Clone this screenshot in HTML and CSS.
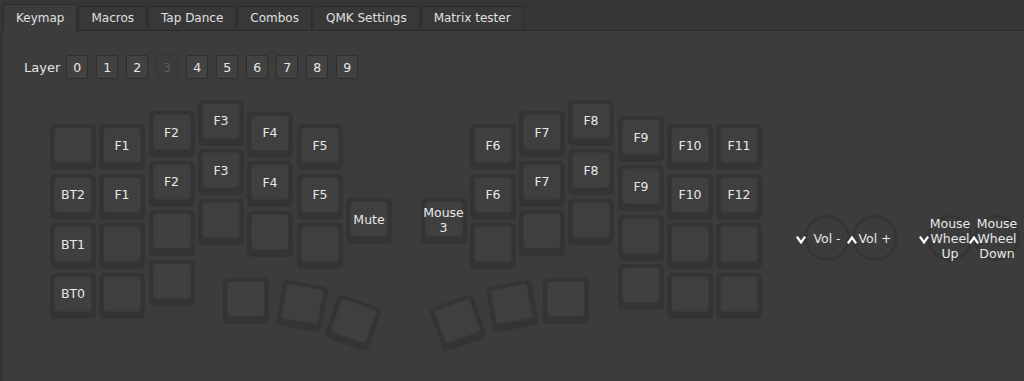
FILE: index.html
```html
<!DOCTYPE html>
<html>
<head>
<meta charset="utf-8">
<link rel="stylesheet" href="styles.css">
</head>
<body>
<div class="window">
  <div class="tabbar">
    <div class="tab active">Keymap</div>
    <div class="tab">Macros</div>
    <div class="tab">Tap Dance</div>
    <div class="tab">Combos</div>
    <div class="tab">QMK Settings</div>
    <div class="tab">Matrix tester</div>
  </div>
  <div class="pane">
    <div class="layer-row">
      <span class="layer-label">Layer</span>
      <div class="layer-btn">0</div>
      <div class="layer-btn">1</div>
      <div class="layer-btn">2</div>
      <div class="layer-btn current">3</div>
      <div class="layer-btn">4</div>
      <div class="layer-btn">5</div>
      <div class="layer-btn">6</div>
      <div class="layer-btn">7</div>
      <div class="layer-btn">8</div>
      <div class="layer-btn">9</div>
    </div>
    <div class="board">
      <!-- left half -->
      <div class="key" style="left:47px;top:45px"><div class="cap"></div></div>
      <div class="key" style="left:47px;top:94.5px"><div class="cap">BT2</div></div>
      <div class="key" style="left:47px;top:144px"><div class="cap">BT1</div></div>
      <div class="key" style="left:47px;top:193.5px"><div class="cap">BT0</div></div>

      <div class="key" style="left:96px;top:45px"><div class="cap">F1</div></div>
      <div class="key" style="left:96px;top:94.5px"><div class="cap">F1</div></div>
      <div class="key" style="left:96px;top:144px"><div class="cap"></div></div>
      <div class="key" style="left:96px;top:193.5px"><div class="cap"></div></div>

      <div class="key" style="left:145.5px;top:32px"><div class="cap">F2</div></div>
      <div class="key" style="left:145.5px;top:81.5px"><div class="cap">F2</div></div>
      <div class="key" style="left:145.5px;top:131px"><div class="cap"></div></div>
      <div class="key" style="left:145.5px;top:180.5px"><div class="cap"></div></div>

      <div class="key" style="left:195px;top:20.5px"><div class="cap">F3</div></div>
      <div class="key" style="left:195px;top:70px"><div class="cap">F3</div></div>
      <div class="key" style="left:195px;top:119.5px"><div class="cap"></div></div>

      <div class="key" style="left:244px;top:32.5px"><div class="cap">F4</div></div>
      <div class="key" style="left:244px;top:82px"><div class="cap">F4</div></div>
      <div class="key" style="left:244px;top:131.5px"><div class="cap"></div></div>

      <div class="key" style="left:294px;top:45px"><div class="cap">F5</div></div>
      <div class="key" style="left:294px;top:94.5px"><div class="cap">F5</div></div>
      <div class="key" style="left:294px;top:144px"><div class="cap"></div></div>

      <div class="key" style="left:343px;top:119px"><div class="cap">Mute</div></div>

      <div class="key" style="left:220px;top:199px"><div class="cap"></div></div>
      <div class="key" style="left:275.5px;top:203.5px;transform:rotate(10deg)"><div class="cap"></div></div>
      <div class="key" style="left:327px;top:221px;transform:rotate(20deg)"><div class="cap"></div></div>

      <!-- right half -->
      <div class="key" style="left:417.5px;top:119px"><div class="cap two">Mouse<br>3</div></div>

      <div class="key" style="left:467px;top:45px"><div class="cap">F6</div></div>
      <div class="key" style="left:467px;top:94.5px"><div class="cap">F6</div></div>
      <div class="key" style="left:467px;top:144px"><div class="cap"></div></div>

      <div class="key" style="left:516px;top:32px"><div class="cap">F7</div></div>
      <div class="key" style="left:516px;top:81.5px"><div class="cap">F7</div></div>
      <div class="key" style="left:516px;top:131px"><div class="cap"></div></div>

      <div class="key" style="left:565px;top:20.5px"><div class="cap">F8</div></div>
      <div class="key" style="left:565px;top:70px"><div class="cap">F8</div></div>
      <div class="key" style="left:565px;top:119.5px"><div class="cap"></div></div>

      <div class="key" style="left:615px;top:37px"><div class="cap">F9</div></div>
      <div class="key" style="left:615px;top:86px"><div class="cap">F9</div></div>
      <div class="key" style="left:615px;top:135.5px"><div class="cap"></div></div>
      <div class="key" style="left:615px;top:185px"><div class="cap"></div></div>

      <div class="key" style="left:664px;top:45px"><div class="cap">F10</div></div>
      <div class="key" style="left:664px;top:94.5px"><div class="cap">F10</div></div>
      <div class="key" style="left:664px;top:144px"><div class="cap"></div></div>
      <div class="key" style="left:664px;top:193.5px"><div class="cap"></div></div>

      <div class="key" style="left:713px;top:45px"><div class="cap">F11</div></div>
      <div class="key" style="left:713px;top:94.5px"><div class="cap">F12</div></div>
      <div class="key" style="left:713px;top:144px"><div class="cap"></div></div>
      <div class="key" style="left:713px;top:193.5px"><div class="cap"></div></div>

      <div class="key" style="left:540px;top:199px"><div class="cap"></div></div>
      <div class="key" style="left:485.5px;top:204px;transform:rotate(-10deg)"><div class="cap"></div></div>
      <div class="key" style="left:432px;top:221px;transform:rotate(-20deg)"><div class="cap"></div></div>

      <!-- encoders -->
      <div class="enc" style="left:801px;top:136px">
        <svg class="chev" viewBox="0 0 10 8" width="10" height="8"><polyline points="1.5,1.5 5,6.5 8.5,1.5"/></svg>
        <span class="enc-label">Vol -</span>
      </div>
      <div class="enc" style="left:849px;top:136px">
        <svg class="chev up" viewBox="0 0 10 8" width="10" height="8"><polyline points="1.5,6.5 5,1.5 8.5,6.5"/></svg>
        <span class="enc-label">Vol +</span>
      </div>
      <div class="enc" style="left:924px;top:136px">
        <svg class="chev" viewBox="0 0 10 8" width="10" height="8"><polyline points="1.5,1.5 5,6.5 8.5,1.5"/></svg>
        <span class="enc-label">Mouse<br>Wheel<br>Up</span>
      </div>
      <div class="enc" style="left:971px;top:136px">
        <svg class="chev up" viewBox="0 0 10 8" width="10" height="8"><polyline points="1.5,6.5 5,1.5 8.5,6.5"/></svg>
        <span class="enc-label">Mouse<br>Wheel<br>Down</span>
      </div>
    </div>
  </div>
</div>
</body>
</html>
```
FILE: styles.css
```css
* { box-sizing: border-box; }
html, body {
  margin: 0;
  padding: 0;
  width: 1024px;
  height: 381px;
  overflow: hidden;
  background: #363636;
  font-family: "DejaVu Sans", "Liberation Sans", sans-serif;
  font-size: 12px;
  color: #e6e6e6;
}
.window {
  display: flex;
  flex-direction: column;
  height: 381px;
}
.tabbar {
  display: flex;
  align-items: flex-end;
  height: 30px;
  padding-left: 3px;
  gap: 1px;
}
.tab {
  height: 23px;
  padding: 0 12px;
  display: flex;
  align-items: center;
  background: #383838;
  border: 1px solid #2b2b2b;
  border-bottom: none;
  border-radius: 2px 2px 0 0;
  color: #e0e0e0;
  margin-bottom: 1px;
}
.tab.active {
  height: 27px;
  margin-bottom: -1px;
  background: #3c3c3c;
  position: relative;
  z-index: 1;
}
.pane {
  flex: 1;
  margin-left: 3px;
  background: #3c3c3c;
  border-top: 1px solid #2b2b2b;
  display: flex;
  flex-direction: column;
}
.layer-row {
  display: flex;
  align-items: center;
  height: 48px;
  padding: 24px 0 0 21px;
  gap: 8px;
}
.layer-label {
  font-size: 13px;
  margin-right: -2px;
  color: #e4e4e4;
}
.layer-btn {
  width: 22px;
  height: 24px;
  display: flex;
  align-items: center;
  justify-content: center;
  background: #424242;
  border: 1px solid #2e2e2e;
  border-radius: 2px;
  color: #e8e8e8;
  font-size: 12.5px;
}
.layer-btn.current {
  background: #3b3b3b;
  border-color: #363636;
  color: #5e5e5e;
}
.board {
  position: relative;
  flex: 1;
}
.key {
  position: absolute;
  width: 46px;
  height: 46px;
  background: #343434;
  border-radius: 5px;
}
.cap {
  position: absolute;
  left: 4px;
  right: 4px;
  top: 3px;
  bottom: 7px;
  background: #3f3f3f;
  border: 1px solid #393939;
  border-radius: 4px;
  display: flex;
  align-items: center;
  justify-content: center;
  text-align: center;
  color: #e8e8e8;
  font-size: 12.5px;
  line-height: 15px;
}
.cap.two {
  padding-top: 2px;
}
.enc {
  position: absolute;
  width: 46px;
  height: 46px;
  border-radius: 50%;
  border: 3px solid #353535;
  display: flex;
  align-items: center;
  justify-content: center;
}
.enc-label {
  position: relative;
  z-index: 2;
  text-align: center;
  font-size: 12.5px;
  line-height: 15px;
  color: #e8e8e8;
  white-space: nowrap;
}
.chev {
  position: absolute;
  left: -11px;
  top: 18px;
  z-index: 3;
}
.chev.up {
  left: -8px;
}
.chev polyline {
  fill: none;
  stroke: #ffffff;
  stroke-width: 2.2;
  stroke-linecap: square;
}
```
